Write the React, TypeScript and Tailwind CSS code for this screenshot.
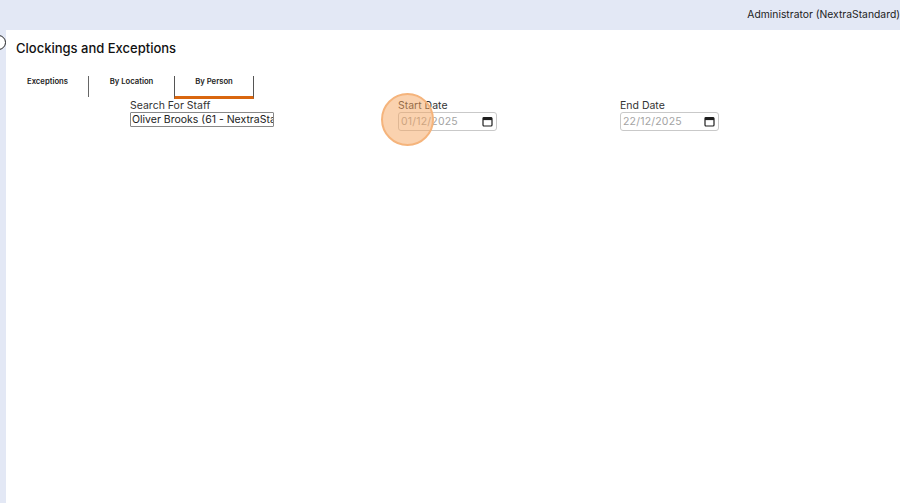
const font = { fontFamily: "Inter, 'Liberation Sans', sans-serif" };

function CalendarIcon() {
    return (
        <svg width="11" height="11" viewBox="0 0 11 11" className="shrink-0">
            <rect x="1" y="1.5" width="9" height="8.5" rx="1" fill="none" stroke="#1f1f1f" strokeWidth="1.2" />
            <rect x="1" y="1.5" width="9" height="2.6" fill="#1f1f1f" />
        </svg>
    );
}

function DateField({ label, value, className }: { label: string; value: string; className: string }) {
    return (
        <div className={className}>
            <div className="text-[10.5px] leading-[13px] text-[#333]">{label}</div>
            <div className="flex h-[19px] w-[99px] items-center justify-between rounded-[3px] border border-[#c9c9c9] pl-[2px] pr-[3px] text-[10.5px] tracking-[0.2px] text-[#a3a3a3]">
                <span>{value}</span>
                <CalendarIcon />
            </div>
        </div>
    );
}

export default function App() {
    return (
        <div className="relative flex h-[503px] w-[900px] flex-col overflow-hidden bg-[#e3e8f5]" style={font}>
            <header className="flex h-[30px] shrink-0 items-center justify-end text-[10.35px] text-[#222]">
                <span className="whitespace-nowrap">Administrator (NextraStandard)</span>
            </header>
            <main className="ml-[6px] flex-1 bg-white pl-[10px] pt-[10px]">
                <h1 className="text-[13px] font-medium leading-[16px] text-[#111]">Clockings and Exceptions</h1>
                <div className="mt-[20px] flex h-[21px] items-start text-[7.7px] font-semibold leading-[11px] text-[#222]">
                    <div className="h-[21px] w-[73px] border-r border-[#666] pl-[11px]">Exceptions</div>
                    <div className="flex h-[21px] w-[85px] justify-center">By Location</div>
                    <div className="flex h-[23px] w-[80px] justify-center border-x border-b-[3px] border-x-[#555] border-b-[#d9660f]">By Person</div>
                </div>
                <div className="flex items-start">
                    <div className="ml-[114px] mt-[2px] w-[144px]">
                        <div className="text-[10.5px] leading-[13px] text-[#333]">Search For Staff</div>
                        <input
                            readOnly
                            value="Oliver Brooks (61 - NextraStandard)"
                            className="block h-[15px] w-[144px] rounded-[1px] border border-[#888] pl-[1px] text-[10.5px] leading-[13px] text-[#222] outline-none"
                        />
                    </div>
                    <DateField label="Start Date" value="01/12/2025" className="ml-[124px] mt-[2px]" />
                    <DateField label="End Date" value="22/12/2025" className="ml-[123px] mt-[2px]" />
                </div>
            </main>
            <div className="absolute left-[-9px] top-[35px] h-[15px] w-[15px] rounded-full border border-[#222] bg-white" />
            <div className="absolute left-[381px] top-[93px] h-[53px] w-[53px] rounded-full border-2 border-[#f5b47c] bg-[#f5a55f]/50" />
        </div>
    );
}
